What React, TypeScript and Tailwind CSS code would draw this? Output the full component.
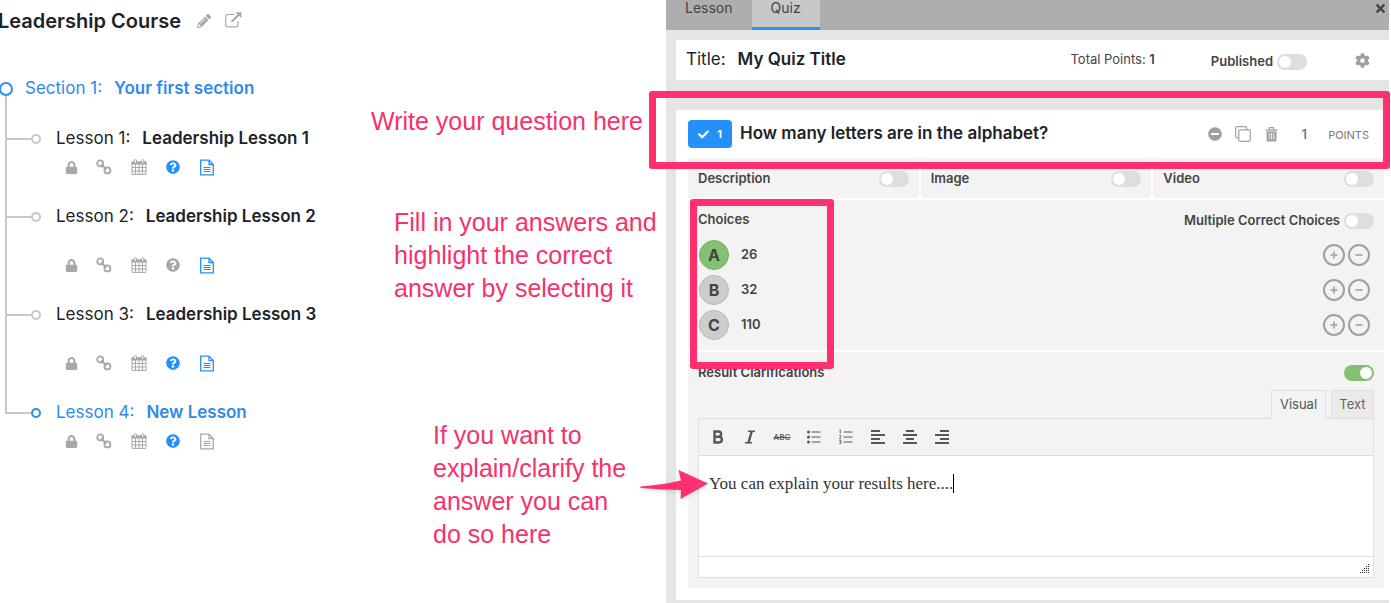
import { useState } from 'react';
import type { ReactNode } from 'react';
import clsx from 'clsx';
import {
  FaCheck,
  FaCog,
  FaLock,
  FaMinusCircle,
  FaPencilAlt,
  FaQuestionCircle,
  FaTimes,
} from 'react-icons/fa';

type Lesson = {
  id: number;
  title: string;
  hasQuiz: boolean;
  hasFile: boolean;
  spaced?: boolean;
  active?: boolean;
};

const LESSONS: Lesson[] = [
  { id: 1, title: 'Leadership Lesson 1', hasQuiz: true, hasFile: true },
  { id: 2, title: 'Leadership Lesson 2', hasQuiz: false, hasFile: true, spaced: true },
  { id: 3, title: 'Leadership Lesson 3', hasQuiz: true, hasFile: true, spaced: true },
  { id: 4, title: 'New Lesson', hasQuiz: true, hasFile: false, active: true },
];

const CHOICES = [
  { letter: 'A', value: '26' },
  { letter: 'B', value: '32' },
  { letter: 'C', value: '110' },
];

const ExternalIcon = () => (
  <svg width="17" height="16" viewBox="0 0 17 16" fill="none" stroke="currentColor">
    <path d="M9.5 2.500H2.700a2 2 0 0 0-2 2v8.300a2 2 0 0 0 2 2h8.300a2 2 0 0 0 2-2V9" strokeWidth="1.200" />
    <path d="M6.500 9.800l7.500-7.300" strokeWidth="2" />
    <path d="M10.500 .3h6v6z" fill="currentColor" stroke="none" />
  </svg>
);

const ChainIcon = () => (
  <svg width="16" height="16" viewBox="0 0 16 16" fill="none" stroke="currentColor" strokeWidth="1.800">
    <circle cx="4.200" cy="4.400" r="3" />
    <circle cx="11.400" cy="11.400" r="3" />
    <path d="M5 5.400l5.500 5" strokeWidth="2" />
  </svg>
);

const CalendarIcon = () => (
  <svg width="16" height="16" viewBox="0 0 16 16" fill="none" stroke="currentColor">
    <path d="M1 3h14v12.400H1zM1 8.500h14M1 12h14M4.500 5v10M8 5v10M11.500 5v10" />
    <path d="M.5 2.500h15v3H.5z" fill="currentColor" stroke="none" />
    <rect x="3.200" y=".6" width="2.400" height="3.600" rx="1.200" fill="#fff" />
    <rect x="10.400" y=".6" width="2.400" height="3.600" rx="1.200" fill="#fff" />
  </svg>
);

const FileIcon = () => (
  <svg width="16" height="17" viewBox="0 0 16 17" fill="none" stroke="currentColor" strokeWidth="1.300">
    <path d="M1.700 1.200h8.300l4.300 4.300v10.300H1.700z" />
    <path d="M10 1.200v4.300h4.300" />
    <path d="M4.500 8.500h7M4.500 10.500h7M4.500 12.500h7" strokeWidth="1.100" />
  </svg>
);

const CopyIcon = () => (
  <svg width="16" height="16" viewBox="0 0 16 16" fill="none" stroke="currentColor" strokeWidth="1.200">
    <path d="M3.800 11.800H2a1.300 1.300 0 0 1-1.300-1.300V2A1.300 1.300 0 0 1 2 .7h8.500A1.300 1.300 0 0 1 11.800 2v1.500" />
    <rect x="3.800" y="3.800" width="11.500" height="11.500" rx="1.200" />
  </svg>
);

const TrashIcon = () => (
  <svg width="13" height="15" viewBox="0 0 13 15" fill="none" stroke="currentColor">
    <path d="M4.200 2.800V1.500a.8.8 0 0 1 .8-.8h3a.8.8 0 0 1 .8.800v1.300" strokeWidth="1.300" />
    <path d="M.5 2.500h12v1.300H.5zM1.500 4.500h10v8.700a1.300 1.300 0 0 1-1.300 1.300H2.800a1.300 1.300 0 0 1-1.300-1.300z" fill="currentColor" stroke="none" />
    <path d="M4.300 6v6.500M6.500 6v6.500M8.700 6v6.500" stroke="#fff" strokeWidth=".8" />
  </svg>
);

const BulletsIcon = () => (
  <svg width="16" height="16" viewBox="0 0 16 16" fill="currentColor">
    <circle cx="2.500" cy="3" r="1.500" />
    <circle cx="2.500" cy="8" r="1.500" />
    <circle cx="2.500" cy="13" r="1.500" />
    <path d="M5.500 2.500h9v1h-9zM5.500 7.500h9v1h-9zM5.500 12.500h9v1h-9z" />
  </svg>
);

const NumbersIcon = () => (
  <svg width="16" height="16" viewBox="0 0 16 16" fill="none" stroke="currentColor">
    <path d="M5.500 3h9M5.500 8h9M5.500 13h9" />
    <path d="M1.300 1.400l1-.6v3.700M1.200 6.300h1.600v1.500l-1.400 1.900h1.700M1.200 11.300h1.700v3.400H1.200M1.500 13h1.400" strokeWidth=".8" />
  </svg>
);

const AlignIcon = ({ d }: { d: string }) => (
  <svg width="16" height="16" viewBox="0 0 16 16" stroke="currentColor" strokeWidth="2">
    <path d={d} />
  </svg>
);

const Toggle = ({ label, on = false }: { label: string; on?: boolean }) => (
  <input
    type="checkbox"
    defaultChecked={on}
    aria-label={label}
    className="h-4 w-[30px] flex-none appearance-none rounded-full bg-[#dedede] p-0.5 before:block before:size-3 before:rounded-full before:bg-white checked:bg-[#82c172] checked:before:ml-3.5"
  />
);

const IconButton = ({
  label,
  className,
  children,
}: {
  label: string;
  className?: string;
  children: ReactNode;
}) => (
  <button type="button" aria-label={label} className={clsx('flex items-center justify-center', className)}>
    {children}
  </button>
);

const LessonItem = ({ lesson, last }: { lesson: Lesson; last: boolean }) => (
  <li className="flex pl-[5px]">
    <div className="flex w-[26px] flex-none flex-col">
      <div className="h-[22px] border-b-2 border-l-2 border-[#c8c8c8]" />
      {!last && <div className="flex-1 border-l-2 border-[#c8c8c8]" />}
    </div>
    <div className="pb-5">
      <div
        className={clsx(
          'flex h-10 items-center pt-0.5 text-[17px]',
          lesson.active ? 'text-[#2f8aea]' : 'text-[#1d2327]'
        )}
      >
        <span
          className={clsx(
            'mr-[15px] size-2.5 rounded-full border-2 bg-white',
            lesson.active ? 'border-[#2491f8]' : 'border-[#c8c8c8]'
          )}
        />
        <span className="mr-3">Lesson {lesson.id}:</span>
        <span className="font-semibold">{lesson.title}</span>
      </div>
      <div
        className={clsx(
          'ml-[33px] flex h-[18px] items-center text-[#a8a8a8]',
          lesson.spaced && 'mt-5'
        )}
      >
        <IconButton label="Access" className="w-3.5">
          <FaLock size={13} />
        </IconButton>
        <IconButton label="Link" className="ml-[18px] w-4">
          <ChainIcon />
        </IconButton>
        <IconButton label="Schedule" className="ml-[19px] w-4">
          <CalendarIcon />
        </IconButton>
        <IconButton label="Quiz" className={clsx('ml-[19px] w-3.5', lesson.hasQuiz && 'text-[#2491f8]')}>
          <FaQuestionCircle size={14} />
        </IconButton>
        <IconButton label="Content" className={clsx('ml-[19px] w-4', lesson.hasFile && 'text-[#2491f8]')}>
          <FileIcon />
        </IconButton>
      </div>
    </div>
  </li>
);

const CourseOutline = () => (
  <main className="min-w-0 overflow-hidden">
    <div className="-ml-0.5 flex h-[42px] items-center">
      <h1 className="mr-4 text-[20px] font-semibold text-[#1d2327]">Leadership Course</h1>
      <IconButton label="Rename" className="mr-3.5 text-[#a8a8a8]">
        <FaPencilAlt size={14} />
      </IconButton>
      <IconButton label="Open course" className="pb-[3px] text-[#a8a8a8]">
        <ExternalIcon />
      </IconButton>
    </div>
    <div className="mt-[26px] flex h-[50px] text-[#2f8aea]">
      <div className="-ml-px flex w-[14px] flex-none flex-col items-center">
        <span className="mt-3.5 size-3.5 flex-none rounded-full border-2 border-[#2491f8]" />
        <span className="w-0.5 flex-1 bg-[#c8c8c8]" />
      </div>
      <h2 className="ml-3 flex h-10 items-center pt-0.5 text-[17px]">
        <span className="mr-3">Section 1:</span>
        <span className="font-semibold">Your first section</span>
      </h2>
    </div>
    <ul>
      {LESSONS.map((lesson, i) => (
        <LessonItem key={lesson.id} lesson={lesson} last={i === LESSONS.length - 1} />
      ))}
    </ul>
  </main>
);

const Choices = () => {
  const [correct, setCorrect] = useState('A');

  return (
    <section className="mt-0.5 bg-[#f3f3f3] px-2.5 pb-2.5">
      <div className="flex h-10 items-center justify-between">
        <h3 className="font-semibold">Choices</h3>
        <div className="flex items-center gap-1 pt-0.5">
          <span className="font-semibold">Multiple Correct Choices</span>
          <Toggle label="Multiple Correct Choices" />
        </div>
      </div>
      <div className="flex flex-col gap-[5px]">
        {CHOICES.map(({ letter, value }) => (
          <div key={letter} className="flex items-center pr-1">
            <button
              type="button"
              onClick={() => setCorrect(letter)}
              className={clsx(
                'ml-px size-[30px] flex-none rounded-full border text-[16px] font-bold',
                correct === letter
                  ? 'border-[#78b368] bg-[#82c172]'
                  : 'border-[#b8b8b8] bg-[#cdcdcd]'
              )}
            >
              {letter}
            </button>
            <input
              aria-label={`Choice ${letter}`}
              defaultValue={value}
              className="mx-3 min-w-0 flex-1 bg-transparent font-semibold"
            />
            <IconButton label="Add choice" className="mr-[3px] size-[22px] rounded-full border-2 border-[#a0a0a0]">
              <svg width="8" height="8" viewBox="0 0 8 8" stroke="#a0a0a0" strokeWidth="1.600">
                <path d="M.5 4h7M4 .5v7" />
              </svg>
            </IconButton>
            <IconButton label="Remove choice" className="size-[22px] rounded-full border-2 border-[#a0a0a0]">
              <svg width="8" height="8" viewBox="0 0 8 8" stroke="#a0a0a0" strokeWidth="1.600">
                <path d="M.5 4h7" />
              </svg>
            </IconButton>
          </div>
        ))}
      </div>
    </section>
  );
};

const ResultEditor = () => (
  <section className="mt-0.5 bg-[#f3f3f3] px-2.5 pb-2.5">
    <div className="flex h-[38px] items-center justify-between pt-1">
      <h3 className="font-semibold">Result Clarifications</h3>
      <Toggle label="Result Clarifications" on />
    </div>
    <div className="flex justify-end gap-[5px] text-[13px] text-[#555]">
      <button type="button" className="relative z-10 -mb-px h-[29px] w-[55px] border border-b-0 border-[#dfdfdf] bg-[#f3f3f3]">
        Visual
      </button>
      <button type="button" className="h-7 w-[43px] border border-b-0 border-[#dfdfdf] bg-[#eaeaea] text-[#666]">
        Text
      </button>
    </div>
    <div className="border border-[#dfdfdf] bg-white">
      <div className="flex h-[37px] border-b border-[#dcdcdc] bg-[#f3f3f3] pl-[3px] text-[#50575e] *:w-8">
        <IconButton label="Bold">
          <svg width="16" height="16" viewBox="0 0 16 16" fill="none" stroke="currentColor" strokeWidth="2.400">
            <path d="M4.500 2.500h4a2.600 2.600 0 0 1 0 5.200h-4zM4.500 7.700h4.500a2.900 2.900 0 0 1 0 5.800H4.500z" />
          </svg>
        </IconButton>
        <IconButton label="Italic">
          <svg width="16" height="16" viewBox="0 0 16 16" fill="none" stroke="currentColor" strokeWidth="1.600">
            <path d="M6 2.300h7M3 13.700h7" />
            <path d="M9.800 2l-3.400 12" strokeWidth="2.400" />
          </svg>
        </IconButton>
        <IconButton label="Strikethrough" className="text-[8px] font-medium line-through">
          ABC
        </IconButton>
        <IconButton label="Bulleted list">
          <BulletsIcon />
        </IconButton>
        <IconButton label="Numbered list">
          <NumbersIcon />
        </IconButton>
        <IconButton label="Align left">
          <AlignIcon d="M1 2h9M1 6h14M1 10h9M1 14h14" />
        </IconButton>
        <IconButton label="Align center">
          <AlignIcon d="M4 2h8M1 6h14M4 10h8M1 14h14" />
        </IconButton>
        <IconButton label="Align right">
          <AlignIcon d="M6 2h9M1 6h14M6 10h9M1 14h14" />
        </IconButton>
      </div>
      <div className="flex h-[101px] items-start border-b border-[#dfdfdf] pt-[18px] pl-2.5">
        <textarea
          aria-label="Result explanation"
          rows={1}
          defaultValue="You can explain your results here...."
          className="field-sizing-content resize-none overflow-hidden font-['Liberation_Serif',serif] text-[17px] leading-5 text-[#333] outline-none"
        />
        <span className="h-[19px] w-px bg-black" />
      </div>
      <div className="flex h-5 items-end justify-end p-[3px]">
        <svg width="10" height="10" viewBox="0 0 10 10" fill="#333">
          <path d="M8 0h1v1H8zM8 2h1v1H8zM6 2h1v1H6zM8 4h1v1H8zM6 4h1v1H6zM4 4h1v1H4zM8 6h1v1H8zM6 6h1v1H6zM4 6h1v1H4zM2 6h1v1H2zM8 8h1v1H8zM6 8h1v1H6zM4 8h1v1H4zM2 8h1v1H2zM0 8h1v1H0z" />
        </svg>
      </div>
    </div>
  </section>
);

const QuestionCard = () => (
  <div className="mt-[30px] ml-2.5 bg-white pr-[5px] pb-3 pl-3">
    <div className="flex h-12 items-center pr-[15px]">
      <button
        type="button"
        className="flex h-7 w-11 items-center justify-center gap-2 rounded bg-[#2491f8] text-[11px] font-bold text-white"
      >
        <FaCheck size={11} />1
      </button>
      <input
        aria-label="Question"
        defaultValue="How many letters are in the alphabet?"
        className="ml-2 min-w-0 flex-1 text-[17px] font-semibold text-[#1d2327]"
      />
      <div className="flex items-center text-[#a0a0a0]">
        <IconButton label="Collapse">
          <FaMinusCircle size={14} />
        </IconButton>
        <IconButton label="Duplicate" className="ml-[13px]">
          <CopyIcon />
        </IconButton>
        <IconButton label="Delete" className="ml-3.5">
          <TrashIcon />
        </IconButton>
      </div>
      <label className="ml-5 flex items-center gap-[18px] pt-0.5 text-[11px] text-[#777]">
        <input defaultValue="1" className="w-3 text-center text-[13px] font-semibold text-[#777]" />
        POINTS
      </label>
    </div>
    <div className="grid grid-cols-3 gap-0.5">
      {['Description', 'Image', 'Video'].map((name) => (
        <div key={name} className="flex h-10 items-center justify-between bg-[#f3f3f3] px-2.5 pt-0.5">
          <span className="font-semibold">{name}</span>
          <Toggle label={name} />
        </div>
      ))}
    </div>
    <Choices />
    <ResultEditor />
  </div>
);

const Annotations = () => (
  <div className="pointer-events-none font-['Liberation_Sans',sans-serif] text-[25px] leading-[33px] text-[#f5326c]">
    <p className="absolute top-[105px] -left-[295px] whitespace-nowrap">Write your question here</p>
    <p className="absolute top-[206px] -left-[272px] whitespace-nowrap">
      Fill in your answers and
      <br />
      highlight the correct
      <br />
      answer by selecting it
    </p>
    <p className="absolute top-[419px] -left-[233px] whitespace-nowrap">
      If you want to
      <br />
      explain/clarify the
      <br />
      answer you can
      <br />
      do so here
    </p>
    <div className="absolute top-[91px] -right-px -left-[17px] h-[78px] rounded-[3px] border-7 border-[#ff306d]" />
    <div className="absolute top-[199px] left-6 h-[170px] w-[144px] rounded-[3px] border-7 border-[#ff306d]" />
    <svg
      className="absolute top-[468px] -left-[26px] drop-shadow-sm"
      width="70"
      height="34"
      viewBox="0 0 70 34"
      fill="#ff306d"
    >
      <path d="M.5 18.500Q22 17 41 12.500L38.500 2 68 15.500 40.500 31 41 22Q22 22 .5 20z" />
    </svg>
  </div>
);

const QuizPanel = () => (
  <aside className="relative min-h-screen bg-[#e5e5e5] text-[13px] text-[#444]">
    <nav className="flex h-[30px] bg-[#aeaeae] text-[14px] leading-4">
      <button type="button" className="flex px-[19px]">
        Lesson
      </button>
      <button type="button" className="flex border-b-3 border-[#2f8fee] bg-[#c8c8c8] px-[19px]">
        Quiz
      </button>
      <IconButton label="Close" className="mr-0.5 ml-auto h-4">
        <FaTimes size={13} />
      </IconButton>
    </nav>
    <div className="mt-2.5 ml-2.5 flex h-10 items-center bg-white pr-[19px] pl-2.5">
      <label className="flex min-w-0 flex-1 items-center gap-3 text-[17px] text-[#1d2327]">
        Title:
        <input defaultValue="My Quiz Title" className="min-w-0 flex-1 font-semibold" />
      </label>
      <span>
        Total Points: <b className="font-semibold">1</b>
      </span>
      <div className="ml-14 flex items-center gap-1 pt-[3px]">
        <span className="font-semibold">Published</span>
        <Toggle label="Published" />
      </div>
      <IconButton label="Quiz settings" className="ml-12 text-[#a0a0a0]">
        <FaCog size={15} />
      </IconButton>
    </div>
    <QuestionCard />
    <Annotations />
  </aside>
);

const App = () => (
  <div className="grid min-h-screen grid-cols-[47.95%_1fr] bg-white pr-0.5 font-['Inter',sans-serif]">
    <CourseOutline />
    <QuizPanel />
  </div>
);

export default App;
